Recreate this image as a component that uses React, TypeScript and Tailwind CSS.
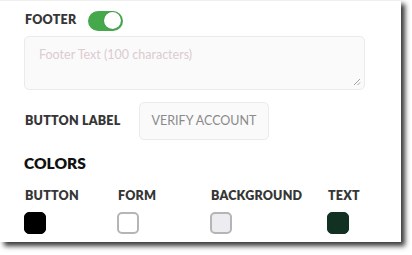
import React from "react";

const label = "font-['Lato','Liberation_Sans',sans-serif] font-extrabold uppercase text-[12.5px] leading-none text-[#363636] tracking-[0.2px]";

export default function App() {
  const swatches = [
    { name: "Button", w: "w-[93px]", cls: "bg-black border border-black" },
    { name: "Form", w: "w-[93px]", cls: "bg-white border-2 border-[#b5b5b5]" },
    { name: "Background", w: "w-[117px]", cls: "bg-[#ececf1] border-2 border-[#b5b5b5]" },
    { name: "Text", w: "w-[60px]", cls: "bg-[#113222] border border-[#113222]" },
  ];
  return (
    <div className="w-[412px] h-[255px] bg-white overflow-hidden">
      <div className="w-[401px] h-[242px] bg-white shadow-[4px_4px_5px_rgba(0,0,0,0.78)] border-t border-[#f0f0f0] pl-[24px] pt-[9px]">
        <div className="flex items-center h-[21px]">
          <span className={label + " w-[64px] pl-[1px]"}>Footer</span>
          <div className="w-[35px] h-[20px] rounded-full bg-[#45a84b] flex items-center justify-end pr-[2px]">
            <div className="w-[17px] h-[17px] rounded-full bg-white shadow-[0_0_1px_rgba(0,0,0,0.4)]" />
          </div>
        </div>
        <div className="mt-[5px] w-[341px] h-[54px] rounded-[5px] border border-[#ebebeb] bg-[#fafafb] relative pl-[14px] pt-[10px]">
          <span className="block leading-[16px] font-['Lato','Liberation_Sans',sans-serif] text-[12.5px] text-[#dccbcf]">Footer Text (100 characters)</span>
          <svg className="absolute right-[3px] bottom-[3px]" width="8" height="8" viewBox="0 0 8 8">
            <line x1="1" y1="7" x2="7" y2="1" stroke="#999" strokeWidth="0.9" />
            <line x1="4.5" y1="7" x2="7" y2="4.5" stroke="#999" strokeWidth="0.9" />
          </svg>
        </div>
        <div className="mt-[12px] flex items-center">
          <span className={label + " w-[115px] pl-[1px]"}>Button Label</span>
          <div className="w-[130px] h-[38px] rounded-[5px] border border-[#ebebeb] bg-[#fafafb] flex items-center justify-center">
            <span className="font-['Lato','Liberation_Sans',sans-serif] text-[12.5px] text-[#8a8a8a] uppercase">Verify Account</span>
          </div>
        </div>
        <div className="mt-[13px] h-[21px] flex items-center">
          <span className="font-['Lato','Liberation_Sans',sans-serif] font-extrabold uppercase text-[15.5px] leading-none text-[#111]">Colors</span>
        </div>
        <div className="mt-[14px] flex">
          {swatches.map((s) => (
            <div key={s.name} className={s.w + " flex flex-col"}>
              <div className="h-[16px] flex items-center">
                <span className={label + " pl-[1px]"}>{s.name}</span>
              </div>
              <div className={"mt-[8px] w-[22px] h-[22px] rounded-[5px] " + s.cls} />
            </div>
          ))}
        </div>
      </div>
    </div>
  );
}
